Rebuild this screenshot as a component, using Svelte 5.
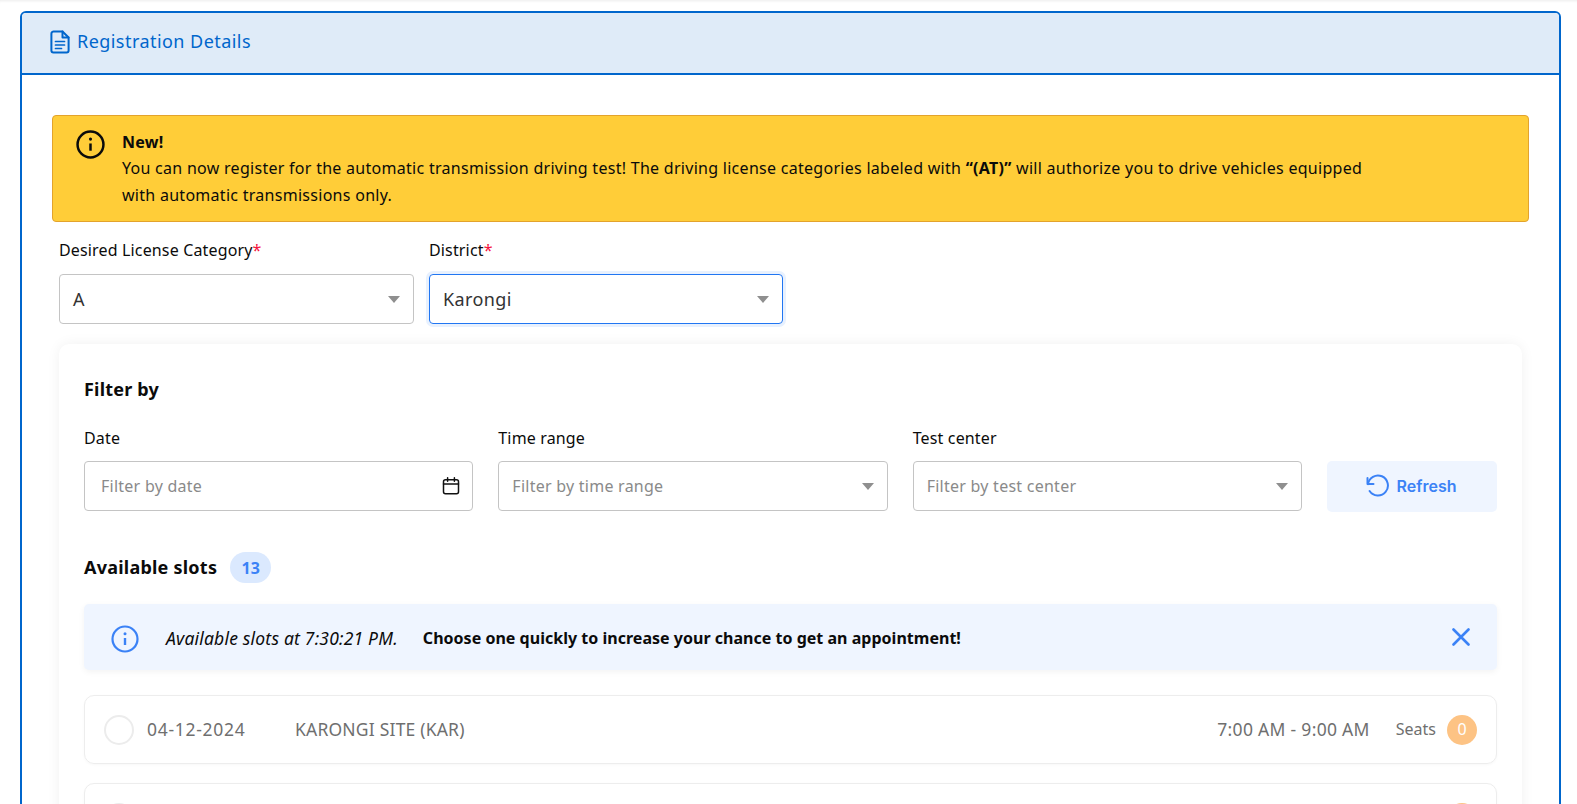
<script>
  const selects = [
    { label: 'Desired License Category', value: 'A', focus: false },
    { label: 'District', value: 'Karongi', focus: true }
  ];
  const slots = [
    { date: '04-12-2024', site: 'KARONGI SITE (KAR)', time: '7:00 AM - 9:00 AM', seats: 0 },
    { date: '04-12-2024', site: 'KARONGI SITE (KAR)', time: '9:00 AM - 11:00 AM', seats: 0 }
  ];
</script>

<div class="page">
  <section class="panel">
    <header class="panel-head">
      <svg class="doc" viewBox="0 0 20 24" width="20" height="24" fill="none" stroke="currentColor" stroke-width="2" stroke-linejoin="round" stroke-linecap="round">
        <path d="M4 1.5h8.5L18.6 7.5v13a2 2 0 0 1-2 2H3.4a2 2 0 0 1-2-2V3.7A2.2 2.2 0 0 1 4 1.5z" />
        <path d="M12.5 1.5v6h6" />
        <path d="M5.5 11.5h9M5.5 15h9M5.5 18.5h6" stroke-width="1.7" />
      </svg>
      <h1>Registration Details</h1>
    </header>

    <div class="panel-body">
      <div class="notice">
        <svg class="notice-icon" viewBox="0 0 28 28" width="28" height="28" fill="none" stroke="#0b0b0b">
          <circle cx="14" cy="14" r="12.5" stroke-width="2.4" />
          <path d="M14 13v7" stroke-width="2.4" />
          <circle cx="14" cy="8.8" r="1.5" fill="#0b0b0b" stroke="none" />
        </svg>
        <div class="notice-text">
          <strong>New!</strong>
          <p>You can now register for the automatic transmission driving test! The driving license categories labeled with <b>“(AT)”</b> will authorize you to drive vehicles equipped<br />with automatic transmissions only.</p>
        </div>
      </div>

      <div class="top-fields">
        {#each selects as s}
          <div class="top-field">
            <div class="field-label">{s.label}<span class="req">*</span></div>
            <div class="big-select" class:focus={s.focus}>
              <span>{s.value}</span><i class="caret"></i>
            </div>
          </div>
        {/each}
      </div>

      <div class="inner">
        <h2>Filter by</h2>
        <div class="filters">
          <div class="filter">
            <div class="field-label">Date</div>
            <div class="input cal">
              <span class="ph date-ph">Filter by date</span>
              <svg viewBox="0 0 18 18" width="18" height="18" fill="none" stroke="#111" stroke-width="1.5" stroke-linecap="round">
                <rect x="1.5" y="2.8" width="15" height="14" rx="2" />
                <path d="M1.5 7h15M5.6 0.8v3.4M12.4 0.8v3.4" />
              </svg>
            </div>
          </div>
          <div class="filter">
            <div class="field-label">Time range</div>
            <div class="input"><span class="ph">Filter by time range</span><i class="caret"></i></div>
          </div>
          <div class="filter">
            <div class="field-label">Test center</div>
            <div class="input"><span class="ph">Filter by test center</span><i class="caret"></i></div>
          </div>
          <button class="refresh" type="button">
            <svg viewBox="0 0 24 24" width="24" height="24" fill="none" stroke="currentColor" stroke-width="2" stroke-linecap="round" stroke-linejoin="round">
              <path d="M2.5 4v6h6" />
              <path d="M3 10.2A10 10 0 1 1 4.6 17" />
            </svg>
            Refresh
          </button>
        </div>

        <div class="slots-head">
          <h3>Available slots</h3>
          <span class="count">13</span>
        </div>

        <div class="info">
          <svg class="info-icon" viewBox="0 0 28 28" width="28" height="28" fill="none" stroke="#3b82f6">
            <circle cx="14" cy="14" r="12.5" stroke-width="2.2" />
            <path d="M14 13v7" stroke-width="2.4" />
            <circle cx="14" cy="8.8" r="1.5" fill="#3b82f6" stroke="none" />
          </svg>
          <em>Available slots at 7:30:21 PM.</em>
          <b>Choose one quickly to increase your chance to get an appointment!</b>
          <svg class="close" viewBox="0 0 18 18" width="18" height="18" fill="none" stroke="#3b82f6" stroke-width="2.6" stroke-linecap="round">
            <path d="M1.5 1.5l15 15M16.5 1.5l-15 15" />
          </svg>
        </div>

        {#each slots as slot}
          <div class="slot">
            <span class="radio"></span>
            <span class="date">{slot.date}</span>
            <span class="site">{slot.site}</span>
            <span class="time">{slot.time}</span>
            <span class="seats">Seats</span>
            <span class="seat-count">{slot.seats}</span>
          </div>
        {/each}
      </div>
    </div>
  </section>
</div>

<style>
  :global(html), :global(body) { margin: 0; height: 100%; overflow: hidden; background: #fff; }
  .page {
    box-sizing: border-box;
    height: 804px;
    overflow: hidden;
    padding: 11px 16px 0 20px;
    font-family: "Noto Sans", sans-serif;
    font-size: 16px;
    color: #0b0b0b;
    box-shadow: inset 0 3px 3px -2px rgba(0, 0, 0, 0.08);
  }
  .panel { border: 2px solid #0066cc; border-radius: 6px; background: #fff; }
  .panel-head {
    height: 60px;
    display: flex;
    align-items: center;
    gap: 7px;
    padding-left: 28px;
    background: #dfebf8;
    border-bottom: 2px solid #0066cc;
    border-radius: 4px 4px 0 0;
    color: #0066cc;
  }
  .doc { flex: none; margin-top: -2px; }
  h1 { margin: -4px 0 0; font-size: 18px; font-weight: 400; letter-spacing: 0.45px; }
  .panel-body { padding: 40px 30px 0; }
  .notice {
    box-sizing: border-box;
    height: 107px;
    display: flex;
    gap: 17px;
    padding: 13px 23px;
    background: #ffcd38;
    border: 1px solid #e3a32c;
    border-radius: 4px;
    line-height: 27px;
  }
  .notice-icon { flex: none; margin-top: 1px; width: 29px; height: 29px; }
  .notice-text { letter-spacing: 0.28px; }
  .notice-text strong { display: block; font-weight: 700; line-height: 26px; }
  .notice-text p { margin: 0; }
  .top-fields { display: flex; gap: 15px; padding: 16px 7px 0; }
  .top-field { width: 355px; }
  .top-field:last-child { width: 354px; }
  .field-label { line-height: 24px; letter-spacing: 0.15px; }
  .req { color: #f5123d; }
  .big-select {
    box-sizing: border-box;
    height: 50px;
    margin-top: 12px;
    display: flex;
    align-items: center;
    justify-content: space-between;
    padding: 0 13px;
    border: 1px solid #c4c4c4;
    border-radius: 4px;
    font-size: 18px;
    color: #333;
    letter-spacing: 0.4px;
  }
  .big-select.focus {
    border-color: #2176f2;
    box-shadow: 0 0 0 3px #e8f1fe;
  }
  .caret {
    width: 0;
    height: 0;
    border-left: 6px solid transparent;
    border-right: 6px solid transparent;
    border-top: 7px solid #8f8f8f;
  }
  .inner {
    margin: 20px 7px 0;
    padding: 32px 25px 0;
    background: #fff;
    border-radius: 10px;
    box-shadow: 0 0 14px rgba(0, 0, 0, 0.06);
  }
  h2 { margin: 0; font-size: 18px; line-height: 26px; font-weight: 700; letter-spacing: 0.2px; }
  .filters { display: flex; gap: 25px; margin-top: 24px; align-items: flex-end; }
  .filter { flex: 1; min-width: 0; }
  .input {
    box-sizing: border-box;
    height: 50px;
    margin-top: 11px;
    display: flex;
    align-items: center;
    justify-content: space-between;
    padding: 0 13px;
    border: 1px solid #c4c4c4;
    border-radius: 4px;
    letter-spacing: 0.25px;
  }
  .input.cal { padding-right: 12px; }
  .ph { color: #8a8a8a; }
  .date-ph { padding-left: 3px; }
  .refresh {
    flex: none;
    box-sizing: border-box;
    width: 170px;
    height: 51px;
    margin-bottom: -1px;
    padding: 0 3px 2px 0;
    display: flex;
    align-items: center;
    justify-content: center;
    gap: 8px;
    border: 0;
    border-radius: 5px;
    background: #eff5ff;
    color: #3b82f6;
    font: 600 16px "Inter", sans-serif;
  }
  .slots-head { display: flex; align-items: center; gap: 13px; margin-top: 41px; height: 31px; }
  h3 { margin: -2px 0 0; font-size: 18px; font-weight: 700; letter-spacing: 0.23px; }
  .count {
    width: 41px;
    height: 31px;
    display: flex;
    align-items: center;
    justify-content: center;
    border-radius: 16px;
    background: #dbe9fe;
    color: #3b82f6;
    font-weight: 700;
  }
  .info {
    box-sizing: border-box;
    height: 66px;
    margin-top: 21px;
    display: flex;
    align-items: center;
    padding: 0 27px;
    background: #eff5ff;
    border-radius: 5px;
    box-shadow: 0 2px 6px rgba(0, 0, 0, 0.05);
  }
  .info-icon { margin-top: 3px; }
  .info em { margin-left: 27px; margin-top: 2px; font-size: 17.5px; letter-spacing: 0.2px; }
  .info b { margin-left: 25px; margin-top: 1px; font-weight: 700; letter-spacing: 0.02px; }
  .close { margin-left: auto; }
  .slot {
    box-sizing: border-box;
    height: 69px;
    margin-top: 25px;
    display: flex;
    align-items: center;
    padding: 0 19px;
    border: 1px solid #ededed;
    border-radius: 10px;
    box-shadow: 0 1px 3px rgba(0, 0, 0, 0.03);
    color: #6f6f6f;
    font-size: 17.5px;
    letter-spacing: 0.3px;
  }
  .slot + .slot { margin-top: 19px; }
  .radio {
    box-sizing: border-box;
    width: 30px;
    height: 30px;
    border: 2px solid #ececec;
    border-radius: 50%;
  }
  .date { margin: -2px 0 0 13px; width: 148px; letter-spacing: 0.7px; }
  .site { margin-top: -2px; letter-spacing: 0.2px; }
  .time { margin: -2px 0 0 auto; }
  .seats { margin-left: 26px; font-size: 16px; letter-spacing: 0; margin-top: -2px; }
  .seat-count {
    width: 30px;
    height: 30px;
    margin-left: 11px;
    padding-bottom: 2px;
    box-sizing: border-box;
    display: flex;
    align-items: center;
    justify-content: center;
    border-radius: 50%;
    background: #fdc384;
    color: #fff;
    font-size: 16px;
    letter-spacing: 0;
  }
</style>
